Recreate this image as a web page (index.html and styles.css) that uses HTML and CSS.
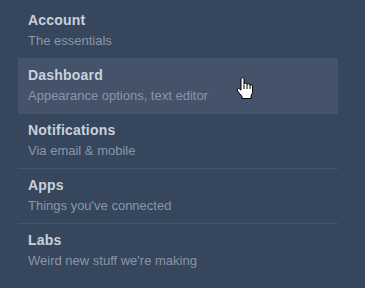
FILE: index.html
```html
<!DOCTYPE html>
<html>

<head>
    <meta charset="UTF-8">
    <title>Settings menu</title>
    <link rel="stylesheet" href="styles.css">
</head>

<body>
    <ul class="menu">
        <li class="item">
            <div class="title">Account</div>
            <div class="sub">The essentials</div>
        </li>
        <li class="item active">
            <div class="title">Dashboard</div>
            <div class="sub">Appearance options, text editor</div>
            <svg class="cursor" width="18" height="23" viewBox="0 0 18 23">
                <path d="M5,1.8 C5,0.4 8,0.4 8,1.8 L8,7.2 C8,5.9 11,5.9 11,7.2 L11,7.8 C11,6.6 14,6.6 14,7.8 L14,8.8 C14,7.6 16.5,7.6 16.5,8.8 L16.5,15.5 L15,19 L15,21.5 L6,21.5 L6,19.5 L1.5,14 C0.4,12.5 2.2,10.7 3.6,11.9 L5,13.2 Z"
                    fill="#fff" stroke="#000" stroke-width="1" stroke-linejoin="round" />
                <path d="M8,7.5 L8,12 M11,8 L11,12 M14,9 L14,12" stroke="#000" stroke-width="1" fill="none" />
            </svg>
        </li>
        <li class="item">
            <div class="title">Notifications</div>
            <div class="sub">Via email &amp; mobile</div>
        </li>
        <li class="item">
            <div class="title">Apps</div>
            <div class="sub">Things you've connected</div>
        </li>
        <li class="item">
            <div class="title">Labs</div>
            <div class="sub">Weird new stuff we're making</div>
        </li>
    </ul>
</body>

</html>
```

FILE: styles.css
```css
html,
body {
    margin: 0;
    height: 100%;
    background-color: #36465c;
    font-family: "Liberation Sans", Arial, sans-serif;
}

.menu {
    list-style: none;
    margin: 0;
    padding: 3px 0 0 18px;
    width: 320px;
}

.item {
    position: relative;
    box-sizing: border-box;
    height: 55px;
    padding: 8px 10px 0 10px;
    border-top: 1px solid #45556b;
}

.item:first-child {
    border-top-color: transparent;
}

/* hover state */
.item.active {
    background: #44536a;
    border-top-color: #44536a;
}

.item.active + .item {
    border-top-color: #44536a;
}

.title {
    font-size: 14px;
    line-height: 17px;
    font-weight: bold;
    letter-spacing: 0.2px;
    color: #c9d1dc;
}

.sub {
    margin-top: 4px;
    font-size: 13px;
    line-height: 16px;
    color: #8a96a7;
}

.cursor {
    position: absolute;
    left: 218px;
    top: 18px;
}
```
